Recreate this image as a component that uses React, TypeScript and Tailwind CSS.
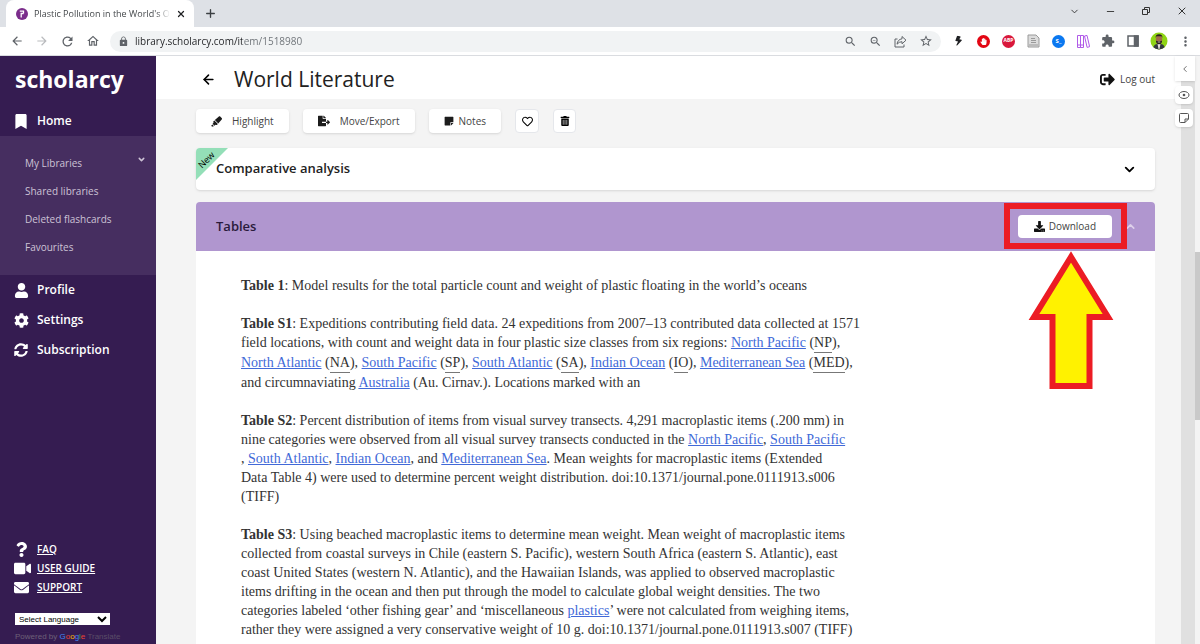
import type { ReactNode } from 'react'
import {
  FaBookmark, FaUser, FaCog, FaSyncAlt, FaQuestion, FaVideo, FaEnvelope, FaHighlighter,
  FaFileExport, FaStickyNote, FaRegHeart, FaTrashAlt, FaDownload, FaSignOutAlt,
  FaBolt, FaHandPaper,
} from 'react-icons/fa'
import {
  MdArrowBack, MdArrowForward, MdRefresh, MdLock, MdSearch, MdZoomOut, MdStarOutline, MdMoreVert,
  MdOutlineHome, MdExtension,
} from 'react-icons/md'
import { ArrowLeft, ChevronDown, ChevronLeft, ChevronUp, Minus, Plus, X } from 'lucide-react'

const libraryLinks = ['My Libraries', 'Shared libraries', 'Deleted flashcards', 'Favourites']

const accountLinks = [
  { label: 'Profile', icon: <FaUser size={15} /> },
  { label: 'Settings', icon: <FaCog size={15} /> },
  { label: 'Subscription', icon: <FaSyncAlt size={14} /> },
]

const helpLinks = [
  { label: 'FAQ', icon: <FaQuestion size={15} /> },
  { label: 'USER GUIDE', icon: <FaVideo size={17} /> },
  { label: 'SUPPORT', icon: <FaEnvelope size={15} /> },
]

function TabBar() {
  return (
    <div className="flex h-[27px] items-end bg-[#dee1e6]">
      <div className="ml-[6px] flex h-[27px] w-[188px] items-center rounded-t-lg bg-white pl-[10px] pr-2">
        <svg viewBox="0 0 12 12" className="size-3 shrink-0" aria-hidden="true">
          <circle cx="6" cy="6" r="6" fill="#7b2d8b" />
          <path d="M5.200 9.500V5.500h2.300M3.800 3.200h3.700v2.300" stroke="#fff" strokeWidth="1.300" fill="none" />
        </svg>
        <span className="ml-[6px] w-[136px] overflow-hidden bg-gradient-to-r from-[#3c4043] from-90% to-transparent bg-clip-text text-[9px] whitespace-nowrap text-transparent">
          Plastic Pollution in the World's Oceans
        </span>
        <button aria-label="Close tab" className="ml-auto text-[#202124]">
          <X size={10} strokeWidth={3} />
        </button>
      </div>
      <button aria-label="New tab" className="mb-[7px] ml-[10px] text-[#3c4043]">
        <Plus size={13} strokeWidth={2.5} />
      </button>
      <div className="mb-[10px] ml-auto flex items-center gap-[25px] pr-3 text-[#333]">
        <button aria-label="Search tabs"><ChevronDown size={11} strokeWidth={2} /></button>
        <button aria-label="Minimize"><Minus size={11} strokeWidth={2} /></button>
        <button aria-label="Restore">
          <svg viewBox="0 0 10 10" className="size-[10px]" fill="none" stroke="currentColor">
            <path d="M1.500 3.500h5v5h-5zM3.500 3V1.500h5v5H7" />
          </svg>
        </button>
        <button aria-label="Close"><X size={12} strokeWidth={2} /></button>
      </div>
    </div>
  )
}

function Extensions() {
  return (
    <div className="flex items-center gap-3 pr-2 pl-[11px] text-[#5f6368]">
      <FaBolt size={10} className="w-[13px] rotate-12 text-[#202124]" />
      <span className="grid size-[13px] place-items-center rounded-full bg-[#e30613] text-white">
        <FaHandPaper size={7} />
      </span>
      <span className="grid size-[13px] place-items-center rounded-full bg-[#d9183b] text-[5px] font-bold text-white">
        ABP
      </span>
      <svg viewBox="0 0 13 14" className="h-[14px] w-[13px]" fill="none" stroke="#9a9a9a">
        <path d="M1 1h8l3 3v9H1z" fill="#dcdcdc" />
        <path d="M4 4.500h4M4 6.500h5M4 8.500h5M2 11h9" />
      </svg>
      <span className="grid size-[13px] place-items-center rounded-full bg-[#0b78f0] text-[6px] font-bold text-white">
        S_
      </span>
      <svg viewBox="0 0 13 13" className="size-[13px]" fill="none" stroke="#b05ae8">
        <path d="M.5.500h3v12h-3zM3.500.500h3v12h-3zM7.500 1l2.500-.6 2.600 11.300-2.500.7zM.5 10h6" />
      </svg>
      <MdExtension size={14} className="-ml-px" />
      <svg viewBox="0 0 12 12" className="size-3" fill="none" stroke="currentColor" strokeWidth="1.500">
        <path d="M1 1h10v10H1z" />
        <path d="M7.500 1H11v10H7.500z" fill="currentColor" />
      </svg>
      <svg viewBox="0 0 18 18" className="-mx-px size-[18px]" role="img" aria-label="Account">
        <clipPath id="avatar"><circle cx="9" cy="9" r="8.500" /></clipPath>
        <g clipPath="url(#avatar)">
          <path d="M0 0h18v18H0z" fill="#8fd414" />
          <path d="M3 18q0-5.500 4-6h4q4 .5 4 6z" fill="#343941" />
          <path d="M7.500 11.500h3L9.500 17h-1z" fill="#e8e1da" />
          <ellipse cx="9" cy="7.500" rx="3.200" ry="4.500" fill="#a06c4a" />
          <path d="M5.700 6Q5.200 2.300 9 2.300T12.300 6L11.500 4.200h-5zM5.900 8.800q3.100.5 6.200 0-.4 3.500-3.100 3.500t-3.100-3.500z" fill="#2a211c" />
          <path d="M7.700 10h2.600" stroke="#e8e1da" strokeWidth=".8" />
        </g>
      </svg>
      <button aria-label="Menu" className="-mx-px"><MdMoreVert size={15} /></button>
    </div>
  )
}

function AddressBar() {
  return (
    <div className="flex h-[29px] items-center border-b border-[#dadce0] bg-white text-[#5f6368]">
      <div className="flex items-center gap-[11px] pl-[10px]">
        <button aria-label="Back"><MdArrowBack size={14} /></button>
        <button aria-label="Forward" className="text-[#b9bbbe]"><MdArrowForward size={14} /></button>
        <button aria-label="Reload"><MdRefresh size={15} /></button>
        <button aria-label="Home page"><MdOutlineHome size={14} /></button>
      </div>
      <div className="ml-[10px] flex h-[21px] flex-1 items-center rounded-full bg-[#f1f3f4] pr-2 pl-2">
        <MdLock size={11} className="shrink-0" />
        <input
          type="text"
          aria-label="Address"
          defaultValue="library.scholarcy.com/item/1518980"
          className="ml-[6px] min-w-0 flex-1 bg-[linear-gradient(90deg,#202124_107px,#6b7075_107px)] bg-clip-text text-[10px] leading-[19px] text-transparent outline-none"
        />
        <div className="flex items-center gap-3">
          <MdSearch size={13} />
          <MdZoomOut size={13} />
          <svg viewBox="0 0 13 13" className="size-[13px]" fill="none" stroke="currentColor">
            <path d="M3.500 4H1v8h9V9.500M8 1.500l4 3.700-4 3.600V6.700q-3 0-5 2.500.7-4.800 5-5.400z" />
          </svg>
          <MdStarOutline size={14} />
        </div>
      </div>
      <Extensions />
    </div>
  )
}

function Sidebar() {
  return (
    <aside className="flex w-[156px] shrink-0 flex-col bg-[#351c51] text-white">
      <div className="h-[50px] pl-[15px] text-[23px] leading-[46px] font-bold">scholarcy</div>
      <a href="#home" className="flex h-[30px] items-center pl-[14px] text-[12px] font-semibold">
        <FaBookmark size={15} className="w-[14px]" />
        <span className="ml-[9px]">Home</span>
      </a>
      <nav className="flex h-[139px] flex-col bg-[#462e60] pt-[13px] text-[10px] text-[#cdc3d6]">
        {libraryLinks.map((label, i) => (
          <a key={label} href="#library" className="flex h-7 items-center justify-between pr-[10px] pl-[25px]">
            {label}
            {i === 0 && <ChevronDown size={9} strokeWidth={4} className="mb-[7px]" />}
          </a>
        ))}
      </nav>
      <nav className="text-[12px] font-semibold">
        {accountLinks.map(({ label, icon }) => (
          <a key={label} href="#account" className="flex h-[30px] items-center pl-[14px]">
            <span className="grid w-[14px] place-items-center">{icon}</span>
            <span className="ml-[9px]">{label}</span>
          </a>
        ))}
      </nav>
      <div className="mt-auto pb-[2px]">
        {helpLinks.map(({ label, icon }) => (
          <a key={label} href="#help" className="flex h-[19px] items-center pl-[14px] text-[10px] font-semibold">
            <span className="grid w-[14px] place-items-center">{icon}</span>
            <span className="ml-[9px] underline">{label}</span>
          </a>
        ))}
        <div className="mt-4 ml-[15px] font-['Liberation_Sans',sans-serif]">
          <select
            aria-label="Language"
            className="block h-3 w-[95px] border-0 bg-white text-[8px] leading-3 text-black"
          >
            <option>Select Language</option>
          </select>
          <p className="mt-[6px] text-[8px] leading-[11px] whitespace-nowrap text-[#6d6078]">
            Powered by{' '}
            <span>
              <span className="text-[#4285f4]">G</span>
              <span className="text-[#ea4335]">o</span>
              <span className="text-[#fbbc05]">o</span>
              <span className="text-[#4285f4]">g</span>
              <span className="text-[#34a853]">l</span>
              <span className="text-[#ea4335]">e</span>
            </span>{' '}
            <span className="text-[#5a4c68]">Translate</span>
          </p>
        </div>
      </div>
    </aside>
  )
}

function ToolButton({ icon, children }: { icon: ReactNode; children: string }) {
  return (
    <button className="flex h-6 items-center rounded bg-white px-[15px] text-[10px] text-[#444] shadow-sm">
      <span className="text-[#1c1c1c]">{icon}</span>
      {children}
    </button>
  )
}

function Link({ children }: { children: string }) {
  return <a href="#term" className="text-[#4169d8] underline">{children}</a>
}

function Abbr({ children }: { children: string }) {
  return <abbr className="inline-block border-b border-[#777] no-underline">{children}</abbr>
}

function Tables() {
  return (
    <div className="flex flex-col gap-[19px] bg-white px-[45px] pt-[25px] pb-10 font-['Liberation_Serif',serif] text-[14px] leading-[19px] whitespace-nowrap text-[#333]">
      <p><b>Table 1</b>: Model results for the total particle count and weight of plastic floating in the world’s oceans</p>
      <p>
        <b>Table S1</b>: Expeditions contributing field data. 24 expeditions from 2007–13 contributed data collected at 1571<br />
        field locations, with count and weight data in four plastic size classes from six regions: <Link>North Pacific</Link> (<Abbr>NP</Abbr>),<br />
        <Link>North Atlantic</Link> (<Abbr>NA</Abbr>), <Link>South Pacific</Link> (<Abbr>SP</Abbr>), <Link>South Atlantic</Link> (<Abbr>SA</Abbr>), <Link>Indian Ocean</Link> (<Abbr>IO</Abbr>), <Link>Mediterranean Sea</Link> (<Abbr>MED</Abbr>),<br />
        and circumnaviating <Link>Australia</Link> (Au. Cirnav.). Locations marked with an
      </p>
      <p>
        <b>Table S2</b>: Percent distribution of items from visual survey transects. 4,291 macroplastic items (.200 mm) in<br />
        nine categories were observed from all visual survey transects conducted in the <Link>North Pacific</Link>, <Link>South Pacific</Link><br />
        , <Link>South Atlantic</Link>, <Link>Indian Ocean</Link>, and <Link>Mediterranean Sea</Link>. Mean weights for macroplastic items (Extended<br />
        Data Table 4) were used to determine percent weight distribution. doi:10.1371/journal.pone.0111913.s006<br />
        (TIFF)
      </p>
      <p>
        <b>Table S3</b>: Using beached macroplastic items to determine mean weight. Mean weight of macroplastic items<br />
        collected from coastal surveys in Chile (eastern S. Pacific), western South Africa (eastern S. Atlantic), east<br />
        coast United States (western N. Atlantic), and the Hawaiian Islands, was applied to observed macroplastic<br />
        items drifting in the ocean and then put through the model to calculate global weight densities. The two<br />
        categories labeled ‘other fishing gear’ and ‘miscellaneous <Link>plastics</Link>’ were not calculated from weighing items,<br />
        rather they were assigned a very conservative weight of 10 g. doi:10.1371/journal.pone.0111913.s007 (TIFF)
      </p>
    </div>
  )
}

// Red frame round the download button with the arrow pointing up at it
function Callout() {
  return (
    <div className="pointer-events-none absolute top-px right-7 w-[123px]">
      <div className="h-[46px] border-[6px] border-[#ec1c24]" />
      <svg viewBox="0 0 86 138" className="mt-[2px] ml-6 h-[138px] w-[86px]">
        <path d="M43 6L80 66H61.500V135H24.500V66H6z" fill="#fff200" stroke="#ec1c24" strokeWidth="6" />
      </svg>
    </div>
  )
}

function Main() {
  return (
    <main className="flex min-w-0 flex-1 flex-col bg-[#f4f4f4]">
      <header className="flex h-[43px] shrink-0 items-center bg-white pt-1 pr-[26px] pl-[45px]">
        <button aria-label="Back to library"><ArrowLeft size={15} strokeWidth={2.5} /></button>
        <h1 className="ml-[18px] text-[21px] font-medium text-[#222]">World Literature</h1>
        <button className="ml-auto flex items-center gap-[5px] text-[10px] text-[#444]">
          <FaSignOutAlt size={15} className="text-[#111]" />
          Log out
        </button>
      </header>
      <div className="min-h-0 flex-1 overflow-hidden pt-[10px] pr-[26px] pl-10">
        <div className="flex items-center gap-[14px]">
          <ToolButton icon={<FaHighlighter size={11} className="mr-[10px]" />}>Highlight</ToolButton>
          <ToolButton icon={<FaFileExport size={12} className="mr-[10px]" />}>Move/Export</ToolButton>
          <ToolButton icon={<FaStickyNote size={10} className="mr-[5px]" />}>Notes</ToolButton>
          <button aria-label="Favourite" className="grid size-6 place-items-center rounded border border-gray-200 bg-white">
            <FaRegHeart size={11} />
          </button>
          <button aria-label="Delete" className="grid h-6 w-[23px] place-items-center rounded border border-gray-200 bg-white">
            <FaTrashAlt size={10} />
          </button>
        </div>
        <section className="relative mt-[15px] flex h-[42px] items-center justify-between overflow-hidden rounded bg-white pr-[18px] pl-5 shadow-sm">
          <span className="absolute top-0 left-0 size-8 bg-[#94dfb8] [clip-path:polygon(0_0,100%_0,0_100%)]" />
          <span className="absolute top-[6px] left-px -rotate-45 text-[9px] leading-3">New</span>
          <h2 className="text-[13px] font-semibold text-[#222]">Comparative analysis</h2>
          <button aria-label="Expand comparative analysis"><ChevronDown size={15} strokeWidth={3} /></button>
        </section>
        <section className="relative mt-3 rounded-t">
          <div className="flex h-[49px] items-center rounded-t bg-[#b096cf] pr-[18px] pl-5">
            <h2 className="text-[13px] font-semibold text-[#2a1a3c]">Tables</h2>
            <button className="ml-auto flex h-[23px] items-center gap-1 rounded bg-white px-4 text-[10px] text-[#444]">
              <FaDownload size={11} className="text-[#111]" />
              Download
            </button>
            <button aria-label="Collapse tables" className="ml-3 text-[#ddd0ea]">
              <ChevronUp size={13} strokeWidth={3} />
            </button>
          </div>
          <Tables />
          <Callout />
        </section>
      </div>
    </main>
  )
}

function SideRail() {
  return (
    <div className="relative flex w-[19px] shrink-0 bg-[#f4f4f4]">
      <div className="w-[14px] bg-[#e0e0e0]" />
      <div className="flex-1 pt-[196px]">
        <div className="h-[168px] bg-[#c9c9c9]" />
      </div>
      <div className="absolute top-0 -left-[6px] flex w-5 flex-col gap-[5px] text-[#555]">
        <button aria-label="Open panel" className="grid h-[25px] w-5 place-items-center bg-white shadow">
          <ChevronLeft size={10} />
        </button>
        <button aria-label="Preview" className="grid size-[18px] place-items-center rounded-sm bg-white shadow">
          <svg viewBox="0 0 12 12" className="size-3" fill="none" stroke="currentColor">
            <ellipse cx="6" cy="6" rx="5" ry="3.500" />
            <circle cx="6" cy="6" r="1.300" fill="currentColor" stroke="none" />
          </svg>
        </button>
        <button aria-label="Annotate" className="grid size-[18px] place-items-center rounded-sm bg-white shadow">
          <svg viewBox="0 0 12 12" className="size-3" fill="none" stroke="currentColor">
            <path d="M2.500 1.500h7q1 0 1 1v4.500L7 10.500H2.500q-1 0-1-1v-7q0-1 1-1zM7 10.500V7h3.500" />
          </svg>
        </button>
      </div>
    </div>
  )
}

export default function App() {
  return (
    <div className="flex h-screen flex-col overflow-hidden bg-white font-['Open_Sans',sans-serif]">
      <TabBar />
      <AddressBar />
      <div className="flex min-h-0 flex-1">
        <Sidebar />
        <Main />
        <SideRail />
      </div>
    </div>
  )
}
